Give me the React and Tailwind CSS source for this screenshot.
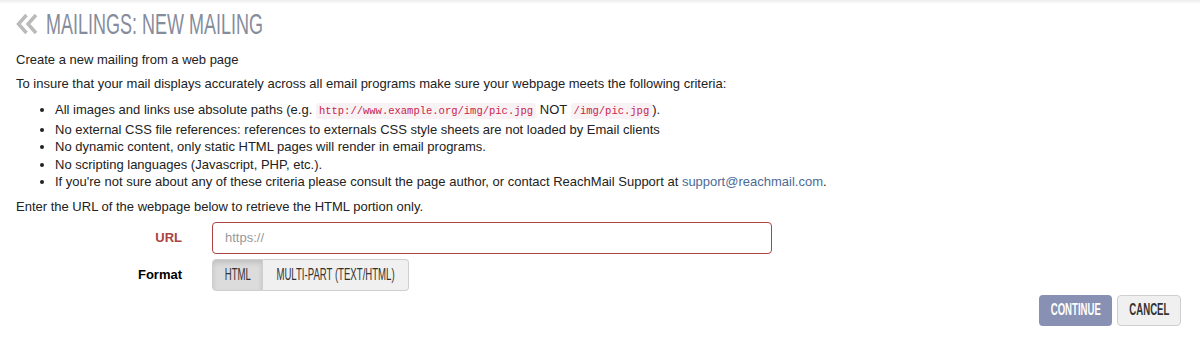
const btnText = "inline-block shrink-0 scale-x-[0.6]";

function Code({ children }) {
  return (
    <code className="font-['Liberation_Mono',monospace] text-[10.5px] text-[#c7254e] bg-[#f9f2f4] rounded-[3px] px-[3px] py-[2px]">
      {children}
    </code>
  );
}

function Chevrons() {
  return (
    <svg width="22" height="22" viewBox="0 0 22 22" fill="none" stroke="#bababa" strokeWidth="3.4" strokeLinejoin="miter">
      <polyline points="10.5,2 2.5,11 10.5,20" />
      <polyline points="20,2 12,11 20,20" />
    </svg>
  );
}

export default function App() {
  return (
    <div className="w-[1200px] h-[340px] bg-white font-['Liberation_Sans',Arial,sans-serif] text-[13px] text-[#222]">
      <div className="h-[4px] bg-gradient-to-b from-[#ececec] to-white" />
      <div className="px-4">
        <div className="flex items-center mt-[2px] h-[36px]">
          <Chevrons />
          <h1 className="ml-[8px] text-[30px] leading-[36px] font-normal text-[#868c9c] whitespace-nowrap">
            <span className="inline-block origin-left scale-x-[0.6]">MAILINGS: NEW MAILING</span>
          </h1>
        </div>
        <p className="mt-[9px] leading-[18px]">Create a new mailing from a web page</p>
        <p className="mt-[6px] leading-[18px]">
          To insure that your mail displays accurately across all email programs make sure your webpage meets the following criteria:
        </p>
        <ul className="list-disc pl-[39px] mt-[8px] leading-[17.5px]">
          <li>
            All images and links use absolute paths (e.g. <Code>http://www.example.org/img/pic.jpg</Code> NOT{" "}
            <Code>/img/pic.jpg</Code>).
          </li>
          <li>No external CSS file references: references to externals CSS style sheets are not loaded by Email clients</li>
          <li>No dynamic content, only static HTML pages will render in email programs.</li>
          <li>No scripting languages (Javascript, PHP, etc.).</li>
          <li>
            If you're not sure about any of these criteria please consult the page author, or contact ReachMail Support at{" "}
            <a className="text-[#4b6a96]">support@reachmail.com</a>.
          </li>
        </ul>
        <p className="mt-[7px] leading-[18px]">Enter the URL of the webpage below to retrieve the HTML portion only.</p>

        <div className="flex items-center mt-[6px]">
          <label className="w-[166px] text-right font-bold text-[#a94442]">URL</label>
          <input
            className="ml-[30px] w-[560px] h-[32px] border border-[#a94442] rounded px-[12px] text-[13px] placeholder:text-[#999] outline-none"
            placeholder="https://"
          />
        </div>
        <div className="flex items-center mt-[5px]">
          <label className="w-[166px] text-right font-bold text-black">Format</label>
          <div className="ml-[30px] flex h-[32px] text-[16px] text-[#333]">
            <button className="w-[51px] flex items-center justify-center bg-[#dcdcdc] border border-[#cfcfcf] rounded-l shadow-[inset_0_3px_5px_rgba(0,0,0,0.125)] whitespace-nowrap">
              <span className={btnText}>HTML</span>
            </button>
            <button className="w-[146px] flex items-center justify-center bg-[#f0f0f0] border border-l-0 border-[#cfcfcf] rounded-r whitespace-nowrap">
              <span className={btnText}>MULTI-PART (TEXT/HTML)</span>
            </button>
          </div>
        </div>
        <div className="flex justify-end gap-[5px] mt-[4px] pr-[3px] text-[16px] font-bold">
          <button className="w-[73px] h-[31px] flex items-center justify-center rounded bg-[#8891b4] text-white whitespace-nowrap">
            <span className={btnText}>CONTINUE</span>
          </button>
          <button className="w-[64px] h-[31px] flex items-center justify-center rounded bg-[#f0f0f0] border border-[#cfcfcf] text-[#333] whitespace-nowrap">
            <span className={btnText}>CANCEL</span>
          </button>
        </div>
      </div>
    </div>
  );
}
